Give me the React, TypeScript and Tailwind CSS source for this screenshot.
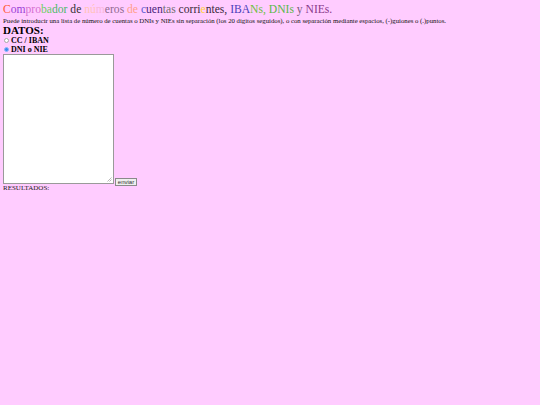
import React from "react";

const parts: [string, string][] = [
  ["C", "text-[#ff5a36]"],
  ["om", "text-[#9b3fd6]"],
  ["pro", "text-[#d56fd0]"],
  ["ba", "text-[#6ccf63]"],
  ["dor", "text-[#4cb86a]"],
  [" de ", "text-[#333333]"],
  ["nú", "text-[#ffc4b8]"],
  ["m", "text-[#f9b8d8]"],
  ["eros ", "text-[#8f6a8f]"],
  ["de", "text-[#ff9f8a]"],
  [" ", "text-[#333333]"],
  ["c", "text-[#5a5ad0]"],
  ["uen", "text-[#4a1f7a]"],
  ["tas", "text-[#6f6f6f]"],
  [" corri", "text-[#3a2a3a]"],
  ["e", "text-[#ffd23a]"],
  ["ntes, ", "text-[#3a2a3a]"],
  ["IBA", "text-[#4b3fb8]"],
  ["Ns, ", "text-[#6cbf3f]"],
  ["DNIs", "text-[#59b84a]"],
  [" y ", "text-[#7a5a7a]"],
  ["NIEs.", "text-[#8a3a8a]"],
];

export default function App() {
  return (
    <div className="min-h-[405px] w-full bg-[#ffccff] px-[3px] pt-[3px] font-['Liberation_Serif',serif] text-black">
      <div className="text-[11.6px] leading-[14px]">
        {parts.map(([t, c], i) => (
          <span key={i} className={c + " whitespace-pre"}>
            {t}
          </span>
        ))}
      </div>
      <div className="whitespace-nowrap text-[6.76px] leading-[8px] text-[#111]">
        Puede introducir una lista de número de cuentas o DNIs y NIEs sin separación (los 20 digitos seguidos), o con separación mediante espacios, (-)guiones o (.)puntos.
      </div>
      <div className="text-[11px] font-bold leading-[11px]">DATOS:</div>
      <label className="flex items-center gap-[2px] text-[8px] font-bold leading-[9px]">
        <span className="ml-[1px] inline-block h-[5px] w-[5px] rounded-full border border-[#a8a8a8] bg-white" />
        CC / IBAN
      </label>
      <label className="flex items-center gap-[2px] text-[8px] font-bold leading-[9px]">
        <span className="ml-[1px] inline-block h-[5px] w-[5px] rounded-full border border-[#8fb8f5] bg-[#3b8af0]" />
        DNI o NIE
      </label>
      <div className="flex items-end gap-[1px]">
        <div className="relative h-[130px] w-[111px] border border-[#9a9a9a] bg-white">
          <svg className="absolute bottom-[1px] right-[1px]" width="5" height="5" viewBox="0 0 5 5">
            <path d="M4.5 0.5 L0.5 4.5 M4.5 2.5 L2.5 4.5" stroke="#999" strokeWidth="0.7" />
          </svg>
        </div>
        <button className="mb-[-2px] h-[8px] w-[22px] border border-[#8a8a8a] bg-[#efefef] px-0 font-['Liberation_Sans',sans-serif] text-[6px] leading-[6px] text-[#333]">
          enviar
        </button>
      </div>
      <div className="text-[7px] leading-[9px] text-[#222]">RESULTADOS:</div>
    </div>
  );
}
